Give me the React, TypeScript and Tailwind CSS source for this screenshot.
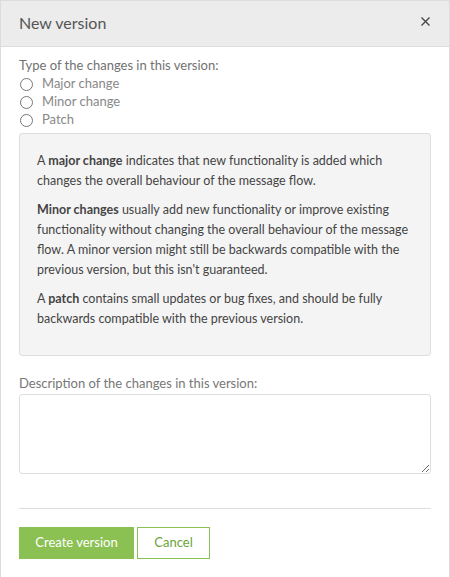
import React from "react";

export default function App() {
  const font = { fontFamily: "Lato, 'Open Sans', sans-serif" };
  return (
    <div className="w-[450px] h-[577px] bg-white border border-[#dcdcdc] border-b-0 flex flex-col" style={font}>
      <div className="h-[46px] shrink-0 bg-[#ececec] border-b border-[#dcdcdc] flex items-center justify-between pl-[18px] pr-[19px]">
        <span className="text-[16px] text-[#555] mt-[-1px]">New version</span>
        <svg width="9" height="9" viewBox="0 0 9 9" className="mt-[-4px]">
          <path d="M0.5 0.5L8.5 8.5M8.5 0.5L0.5 8.5" stroke="#444" strokeWidth="1.3" />
        </svg>
      </div>
      <div className="px-[18px] pt-[9px] flex flex-col">
        <div className="text-[13px] text-[#717171] leading-[18px]">Type of the changes in this version:</div>
        <div className="flex flex-col mt-[1px]">
          {["Major change", "Minor change", "Patch"].map((l) => (
            <label key={l} className="flex items-center h-[18px] text-[13px] text-[#888]">
              <span className="w-[13px] h-[13px] rounded-full border border-[#777] ml-[1px] mr-[9px] bg-white" />
              {l}
            </label>
          ))}
        </div>
        <div className="mt-[4px] h-[223px] bg-[#f4f4f4] border border-[#dedede] rounded-[3px] px-[17px] pt-[17px] text-[12.5px] leading-[20px] text-[#444]">
          <p>
            A <b>major change</b> indicates that new functionality is added which changes the overall behaviour of the message flow.
          </p>
          <p className="mt-[9px]">
            <b>Minor changes</b> usually add new functionality or improve existing functionality without changing the overall behaviour of the message flow. A minor version might still be backwards compatible with the previous version, but this isn't guaranteed.
          </p>
          <p className="mt-[9px]">
            A <b>patch</b> contains small updates or bug fixes, and should be fully backwards compatible with the previous version.
          </p>
        </div>
        <div className="mt-[18px] text-[13px] text-[#777] leading-[18px]">Description of the changes in this version:</div>
        <textarea className="mt-[2px] h-[80px] w-full border border-[#dedede] rounded-[3px] bg-white" />
        <div className="mt-[34px] border-t border-[#dedede]" />
        <div className="mt-[18px] flex gap-[3px]">
          <button className="w-[115px] h-[32px] bg-[#8bc152] text-white text-[13px]">Create version</button>
          <button className="w-[73px] h-[32px] border border-[#8bc152] bg-white text-[#6aa33a] text-[13px]">Cancel</button>
        </div>
      </div>
    </div>
  );
}
